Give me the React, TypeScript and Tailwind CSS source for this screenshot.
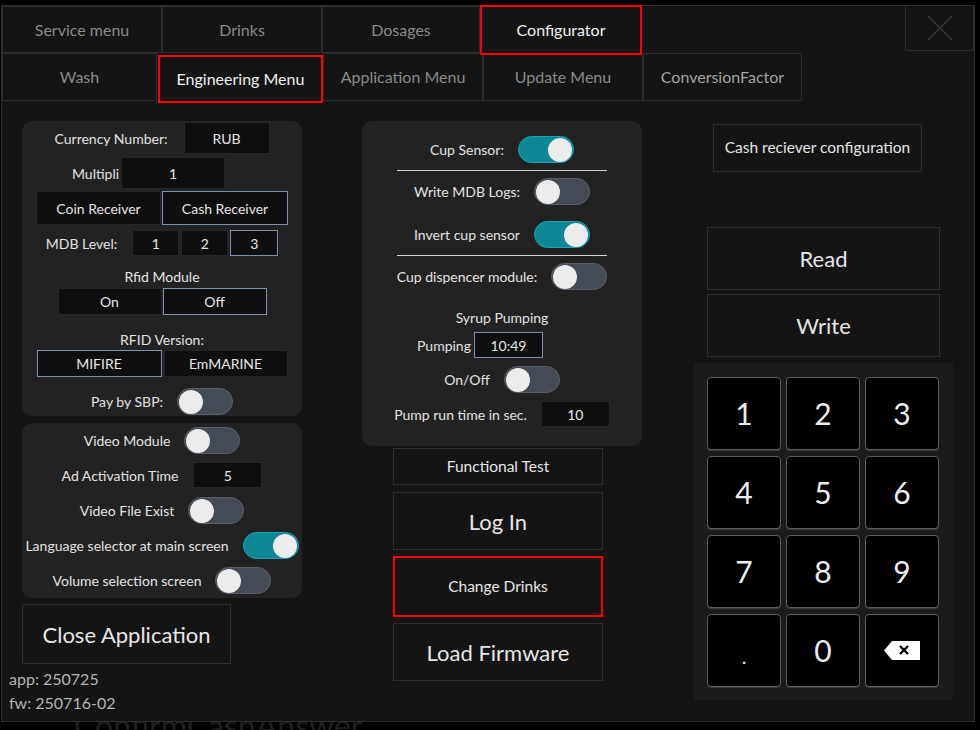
import React from "react";

const tabText = "text-[16px] text-[#8a8a8a]";

function Toggle({ on }: { on?: boolean }) {
  return (
    <div
      className={`flex h-[27px] w-[56px] shrink-0 items-center rounded-full border px-[1px] ${
        on ? "justify-end border-[#1ba3b3] bg-[#0e8795]" : "justify-start border-[#5a6069] bg-[#454b54]"
      }`}
    >
      <div className="h-[24px] w-[24px] rounded-full bg-[#ececec]" />
    </div>
  );
}

function Field({ value, w, h = 26, active }: { value: string; w: number; h?: number; active?: boolean }) {
  return (
    <div
      className={`flex shrink-0 items-center justify-center border bg-[#0f0f0f] text-[14px] text-[#e6e6e6] ${
        active ? "border-[#7f8fae]" : "border-[#262626]"
      }`}
      style={{ width: w, height: h }}
    >
      {value}
    </div>
  );
}

function Row({ label, children, className = "" }: { label: string; children: React.ReactNode; className?: string }) {
  return (
    <div className={`flex items-center justify-center gap-[14px] whitespace-nowrap text-[14px] text-[#e3e3e3] ${className}`}>
      <span>{label}</span>
      {children}
    </div>
  );
}

function Btn({ children, className = "" }: { children: React.ReactNode; className?: string }) {
  return (
    <div className={`flex items-center justify-center border border-[#2e2e2e] text-[#e6e6e6] ${className}`}>{children}</div>
  );
}

function Key({ children }: { children: React.ReactNode }) {
  return (
    <div className="flex h-[73px] w-[74px] items-center justify-center rounded-[4px] border border-[#5c5c5c] bg-black text-[30px] text-[#ececec] shadow-[0_1px_0_#3a3a3a]">
      {children}
    </div>
  );
}

export default function App() {
  return (
    <div className="h-[730px] w-[980px] overflow-hidden bg-black font-[family-name:Lato,sans-serif]">
      <div className="h-[5px]" />
      <div className="ml-px flex h-[717px] w-[974px] flex-col border border-[#2e2e2e] bg-[#141414]">
        {/* top tabs */}
        <div className="flex h-[47px] shrink-0 items-start">
          <div className={`flex h-[47px] w-[160px] items-center justify-center border border-[#2c2c2c] ${tabText}`}>Service menu</div>
          <div className={`flex h-[47px] w-[160px] items-center justify-center border border-[#2c2c2c] ${tabText}`}>Drinks</div>
          <div className={`flex h-[47px] w-[158px] items-center justify-center border border-[#2c2c2c] ${tabText}`}>Dosages</div>
          <div className="relative z-10 -mt-px flex h-[50px] w-[162px] items-center justify-center border-2 border-[#ff0000] bg-[#141414] text-[16px] text-[#f0f0f0]">
            Configurator
          </div>
          <div className="ml-auto -mt-px flex h-[46px] w-[69px] items-center justify-center border border-[#2c2c2c]">
            <svg width="26" height="26" viewBox="0 0 26 26">
              <path d="M1 1L25 25M25 1L1 25" stroke="#3a3a3a" strokeWidth="1.3" />
            </svg>
          </div>
        </div>
        <div className="flex h-[48px] shrink-0 items-start">
          <div className={`flex h-[48px] w-[155px] items-center justify-center border border-[#2c2c2c] ${tabText}`}>Wash</div>
          <div className="relative z-10 ml-px mt-[2px] flex h-[48px] w-[165px] items-center justify-center border-2 border-[#ff0000] text-[16px] text-[#f0f0f0]">
            Engineering Menu
          </div>
          <div className={`flex h-[48px] w-[160px] items-center justify-center border border-[#2c2c2c] ${tabText}`}>Application Menu</div>
          <div className={`flex h-[48px] w-[160px] items-center justify-center border border-[#2c2c2c] ${tabText}`}>Update Menu</div>
          <div className="flex h-[48px] w-[159px] items-center justify-center border border-[#2c2c2c] text-[16px] text-[#a2a2a2]">
            ConversionFactor
          </div>
        </div>

        <div className="flex flex-1">
          {/* left column */}
          <div className="ml-[20px] flex w-[280px] flex-col pt-[20px]">
            <div className="flex h-[295px] flex-col rounded-[10px] bg-[#222222] text-[14px] text-[#e3e3e3]">
              <div className="mt-px flex h-[32px] items-center justify-center gap-[16px]">
                <span>Currency Number:</span>
                <Field value="RUB" w={86} h={32} />
              </div>
              <div className="mt-[3px] flex h-[32px] items-center gap-[2px] pl-[50px]">
                <span>Multipli</span>
                <Field value="1" w={104} h={32} />
              </div>
              <div className="mt-[2px] flex h-[34px] justify-center gap-px">
                <Field value="Coin Receiver" w={125} h={34} />
                <Field value="Cash Receiver" w={126} h={34} active />
              </div>
              <div className="mt-[5px] flex h-[26px] items-center justify-center">
                <span className="mr-[15px]">MDB Level:</span>
                <div className="flex gap-[2px]">
                  <Field value="1" w={47} />
                  <Field value="2" w={47} />
                  <Field value="3" w={48} active />
                </div>
              </div>
              <div className="mt-[10px] flex h-[20px] items-center justify-center">Rfid Module</div>
              <div className="mt-[2px] flex h-[27px] justify-center gap-px">
                <Field value="On" w={104} h={27} />
                <Field value="Off" w={104} h={27} active />
              </div>
              <div className="mt-[14px] flex h-[20px] items-center justify-center">RFID Version:</div>
              <div className="mt-px flex h-[27px] justify-center gap-[2px]">
                <Field value="MIFIRE" w={125} h={27} active />
                <Field value="EmMARINE" w={124} h={27} />
              </div>
              <Row label="Pay by SBP:" className="mt-[11px]">
                <Toggle />
              </Row>
            </div>

            <div className="mt-[7px] flex h-[175px] flex-col rounded-[10px] bg-[#222222] pt-[4px]">
              <Row label="Video Module">
                <Toggle />
              </Row>
              <Row label="Ad Activation Time" className="mt-[8px] gap-[15px]">
                <Field value="5" w={69} />
              </Row>
              <Row label="Video File Exist" className="mt-[9px]">
                <Toggle />
              </Row>
              <Row label="Language selector at main screen" className="mt-[8px]">
                <Toggle on />
              </Row>
              <Row label="Volume selection screen" className="mt-[8px]">
                <Toggle />
              </Row>
            </div>

            <Btn className="mt-[6px] h-[60px] w-[209px] text-[22px]">Close Application</Btn>
            <div className="-ml-[13px] mt-[3px] text-[16px] leading-[24px] text-[#b4b4b4]">
              <div>app: 250725</div>
              <div>fw: 250716-02</div>
            </div>
          </div>

          {/* middle column */}
          <div className="ml-[60px] flex w-[280px] flex-col pt-[20px]">
            <div className="flex h-[325px] flex-col rounded-[10px] bg-[#222222] pt-[15px]">
              <Row label="Cup Sensor:">
                <Toggle on />
              </Row>
              <div className="mx-auto mt-[7px] h-px w-[210px] bg-[#d4d4d4]" />
              <Row label="Write MDB Logs:" className="mt-[7px]">
                <Toggle />
              </Row>
              <Row label="Invert cup sensor" className="mt-[16px]">
                <Toggle on />
              </Row>
              <div className="mx-auto mt-[7px] h-px w-[210px] bg-[#d4d4d4]" />
              <Row label="Cup dispencer module:" className="mt-[7px]">
                <Toggle />
              </Row>
              <div className="mt-[17px] flex h-[20px] items-center justify-center text-[14px] text-[#e3e3e3]">Syrup Pumping</div>
              <div className="mt-[5px] flex h-[26px] items-center gap-[3px] pl-[55px] text-[14px] text-[#e3e3e3]">
                <span>Pumping</span>
                <Field value="10:49" w={69} active />
              </div>
              <Row label="On/Off" className="mt-[8px]">
                <Toggle />
              </Row>
              <Row label="Pump run time in sec." className="mt-[8px]">
                <Field value="10" w={69} />
              </Row>
            </div>
            <div className="ml-[31px] flex w-[210px] flex-col">
              <Btn className="mt-[2px] h-[37px] text-[15.5px]">Functional Test</Btn>
              <Btn className="mt-[7px] h-[58px] text-[22px]">Log In</Btn>
              <div className="mt-[6px] flex h-[61px] items-center justify-center border-2 border-[#ff0000] text-[15.5px] text-[#e6e6e6]">
                Change Drinks
              </div>
              <Btn className="mt-[6px] h-[58px] text-[22px]">Load Firmware</Btn>
            </div>
          </div>

          {/* right column */}
          <div className="ml-[52px] flex w-[260px] flex-col">
            <Btn className="ml-[19px] mt-[23px] h-[48px] w-[209px] text-[15.5px]">Cash reciever configuration</Btn>
            <Btn className="ml-[13px] mt-[55px] h-[63px] w-[233px] text-[22px]">Read</Btn>
            <Btn className="ml-[13px] mt-[4px] h-[63px] w-[233px] text-[22px]">Write</Btn>
            <div className="mt-[6px] h-[337px] w-[259px] bg-[#1b1b1b] pl-[13px] pt-[14px]">
              <div className="grid grid-cols-[74px_74px_74px] gap-x-[5px] gap-y-[6px]">
                {["1", "2", "3", "4", "5", "6", "7", "8", "9"].map((k) => (
                  <Key key={k}>{k}</Key>
                ))}
                <Key>
                  <span className="mt-[10px] text-[20px]">.</span>
                </Key>
                <Key>0</Key>
                <Key>
                  <svg width="36" height="20" viewBox="0 0 36 20">
                    <path d="M8 0H36V19H8L0 9.5Z" fill="#ffffff" />
                    <path d="M16 5L24 13M24 5L16 13" stroke="#000000" strokeWidth="2.4" />
                  </svg>
                </Key>
              </div>
            </div>
          </div>
        </div>
      </div>
      <div className="h-[8px] overflow-hidden">
        <div className="ml-[74px] h-[8px] overflow-hidden text-[32px] leading-[8px] text-[#1f1f1f]">ConfirmCashAnswer</div>
      </div>
    </div>
  );
}
